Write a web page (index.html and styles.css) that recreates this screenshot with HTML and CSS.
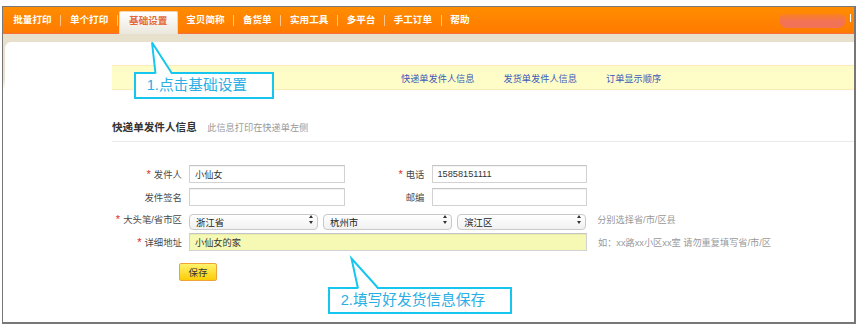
FILE: index.html
```html
<!DOCTYPE html>
<html lang="zh-CN">
<head>
  <meta charset="UTF-8" />
  <meta name="viewport" content="width=device-width, initial-scale=1.0"/>
  <title>基础设置</title>
  <link rel="stylesheet" href="styles.css">
</head>
<body>
  <div class="frame">
    <div class="nav">
      <a href="#" class="nav-item">批量打印</a>
      <span class="sep"></span>
      <a href="#" class="nav-item">单个打印</a>
      <span class="sep"></span>
      <a href="#" class="nav-item active">基础设置</a>
      <a href="#" class="nav-item">宝贝简称</a>
      <span class="sep"></span>
      <a href="#" class="nav-item">备货单</a>
      <span class="sep"></span>
      <a href="#" class="nav-item">实用工具</a>
      <span class="sep"></span>
      <a href="#" class="nav-item">多平台</a>
      <span class="sep"></span>
      <a href="#" class="nav-item">手工订单</a>
      <span class="sep"></span>
      <a href="#" class="nav-item">帮助</a>
      <span class="nav-user"></span>
      <span class="nav-tick"></span>
    </div>

    <div class="main">
      <div class="panel">
        <div class="content">
          <div class="tabbar">
            <a href="#">快递单发件人信息</a>
            <a href="#">发货单发件人信息</a>
            <a href="#">订单显示顺序</a>
          </div>

          <div class="section-title">
            <b>快递单发件人信息</b>
            <span>此信息打印在快递单左侧</span>
          </div>

          <form class="form" onsubmit="return false">
            <div class="row">
              <label class="lbl"><em>*</em>发件人</label>
              <input type="text" class="txt" value="小仙女">
              <label class="lbl lbl2"><em>*</em>电话</label>
              <input type="text" class="txt" value="15858151111">
            </div>
            <div class="row">
              <label class="lbl">发件签名</label>
              <input type="text" class="txt">
              <label class="lbl lbl2">邮编</label>
              <input type="text" class="txt">
            </div>
            <div class="row">
              <label class="lbl"><em>*</em>大头笔/省市区</label>
              <span class="select"><select><option>浙江省</option></select></span>
              <span class="select"><select><option>杭州市</option></select></span>
              <span class="select"><select><option>滨江区</option></select></span>
              <span class="hint">分别选择省/市/区县</span>
            </div>
            <div class="row">
              <label class="lbl"><em>*</em>详细地址</label>
              <input type="text" class="txt wide" value="小仙女的家">
              <span class="hint">如：xx路xx小区xx室 请勿重复填写省/市/区</span>
            </div>
            <button type="submit" class="btn-save">保存</button>
          </form>
        </div>
      </div>
    </div>
  </div>

  <!-- 标注 -->
  <div class="callout callout-1">1.点击基础设置</div>
  <div class="callout callout-2">2.填写好发货信息保存</div>
  <svg class="pointers" width="861" height="329" viewBox="0 0 861 329">
    <polygon points="155.5,75 152,42.5 172,75" fill="#fff"/>
    <polyline points="155.5,73.5 152,42.5 172,73.5" fill="none" stroke="#16c6ef" stroke-width="2" stroke-linejoin="miter"/>
    <polygon points="358,290 351.5,258.5 378.5,290" fill="#fff"/>
    <polyline points="358,288.5 351.5,258.5 378.5,288.5" fill="none" stroke="#16c6ef" stroke-width="2" stroke-linejoin="miter"/>
  </svg>
</body>
</html>
```

FILE: styles.css
```css
body {
  margin: 0;
  background: #fff;
  font-family: "Liberation Sans", "Noto Sans CJK SC", sans-serif;
  color: #333;
}
a {
  text-decoration: none;
}
.frame {
  margin: 6px 0 0 2px;
  width: 854px;
  height: 318px;
  box-sizing: border-box;
  border-style: solid;
  border-color: #777;
  border-width: 1px 2px 2px 1px;
  display: flex;
  flex-direction: column;
}

/* 顶部导航 */
.nav {
  height: 26px;
  border-bottom: 1px solid #f9703e;
  background: linear-gradient(#ff8d00, #ff7a00);
  display: flex;
  align-items: center;
  padding-left: 1.65px;
}
.nav-item {
  color: #fff;
  font-weight: bold;
  font-size: 9.6px;
  padding: 0 8.65px;
  line-height: 14px;
  white-space: nowrap;
}
.nav-item.active {
  align-self: flex-end;
  margin: 0 0 -1px 1px;
  padding: 0 9.15px 5px;
  line-height: 17px;
  color: #e4693a;
  background: linear-gradient(#ffffff, #ebe7dc);
  border: 1px solid #f6d2b4;
  border-bottom: none;
  border-radius: 2px 2px 0 0;
}
.sep {
  width: 1px;
  height: 11px;
  background: rgba(255, 255, 255, 0.55);
}
.nav-user {
  margin-left: auto;
  width: 65px;
  height: 14px;
  margin-top: 2px;
  border-radius: 3px 3px 7px 7px;
  background: linear-gradient(rgba(244, 118, 90, 0.35), #f27258 55%);
}
.nav-tick {
  width: 1px;
  height: 8px;
  margin: 0 3px 5px 5px;
  background: #fff;
}

/* 主体 */
.main {
  flex: 1;
  background: linear-gradient(#e6e0cc 45px, #fff 56px);
  padding: 8px 0 0 2px;
  display: flex;
}
.panel {
  flex: 1;
  background: #fff;
  border-top-left-radius: 6px;
}
.content {
  margin-left: 107px;
  padding-top: 23px;
}
.tabbar {
  height: 23px;
  background: #fefdc8;
  border-top: 1px solid #fcebb6;
  border-bottom: 1px solid #fcebb6;
  padding-left: 289px;
  display: flex;
  align-items: center;
  gap: 29px;
}
.tabbar a {
  color: #4059b8;
  font-size: 9.2px;
}
.section-title {
  margin-top: 28px;
  line-height: 16px;
  padding-bottom: 5px;
  border-bottom: 1px solid #e9e9e9;
}
.section-title b {
  font-size: 10.6px;
  color: #333;
}
.section-title span {
  font-size: 9.2px;
  color: #999;
  margin-left: 6px;
}

/* 表单 */
.form {
  margin-top: 21px;
}
.row {
  height: 22.5px;
  display: flex;
  align-items: center;
}
.lbl {
  width: 77px;
  box-sizing: border-box;
  padding-right: 7px;
  text-align: right;
  font-size: 9.4px;
  color: #4a4a4a;
  white-space: nowrap;
}
.lbl2 {
  width: 87px;
}
.lbl em {
  font-style: normal;
  font-size: 11px;
  color: #e0281e;
  margin-right: 3px;
}
.txt {
  width: 155.5px;
  height: 18.4px;
  box-sizing: border-box;
  margin: 0;
  padding: 0 5px;
  border: 1px solid #d2d2d2;
  border-top-color: #c4c4c4;
  box-shadow: inset 0 1px 1px rgba(0, 0, 0, 0.05);
  font-family: inherit;
  font-size: 9.2px;
  color: #333;
  outline: none;
}
.txt.wide {
  width: 397.5px;
  background: #f5f9b4;
}
.select {
  position: relative;
  width: 129.3px;
  height: 15.5px;
  margin-right: 4.8px;
}
.select:nth-of-type(3) {
  width: 128.5px;
  margin-right: 0;
}
.select select {
  appearance: none;
  -webkit-appearance: none;
  width: 100%;
  height: 100%;
  box-sizing: border-box;
  margin: 0;
  padding: 0 0 0 6px;
  border: 1px solid #c9c9c9;
  border-radius: 4px;
  background: linear-gradient(#ffffff, #f1f1f1);
  font-family: inherit;
  font-size: 9.4px;
  color: #222;
  outline: none;
}
.select::before,
.select::after {
  content: "";
  position: absolute;
  right: 5px;
  border-left: 2px solid transparent;
  border-right: 2px solid transparent;
}
.select::before {
  top: 3.5px;
  border-bottom: 3px solid #333;
}
.select::after {
  bottom: 3.5px;
  border-top: 3px solid #333;
}
.hint {
  margin-left: 11.5px;
  font-size: 9.2px;
  color: #999;
  white-space: nowrap;
}
.btn-save {
  display: block;
  margin: 9.75px 0 0 67px;
  width: 38px;
  height: 18.3px;
  padding: 0;
  border: 1px solid #eea33a;
  border-radius: 2px;
  background: linear-gradient(#fff26c, #fbcd05);
  font-family: inherit;
  font-size: 9.5px;
  color: #333;
  cursor: pointer;
}

/* 标注框 */
.callout {
  position: absolute;
  height: 26.7px;
  box-sizing: border-box;
  border: 2px solid #16c6ef;
  background: #fff;
  color: #2aaee4;
  font-size: 14.7px;
  line-height: 22.7px;
  white-space: nowrap;
}
.callout-1 {
  left: 134.3px;
  top: 72.3px;
  width: 139.4px;
  padding-left: 10.4px;
}
.callout-2 {
  left: 327.7px;
  top: 287.3px;
  width: 184.3px;
  padding-left: 11px;
}
.pointers {
  position: absolute;
  left: 0;
  top: 0;
  pointer-events: none;
}
```
